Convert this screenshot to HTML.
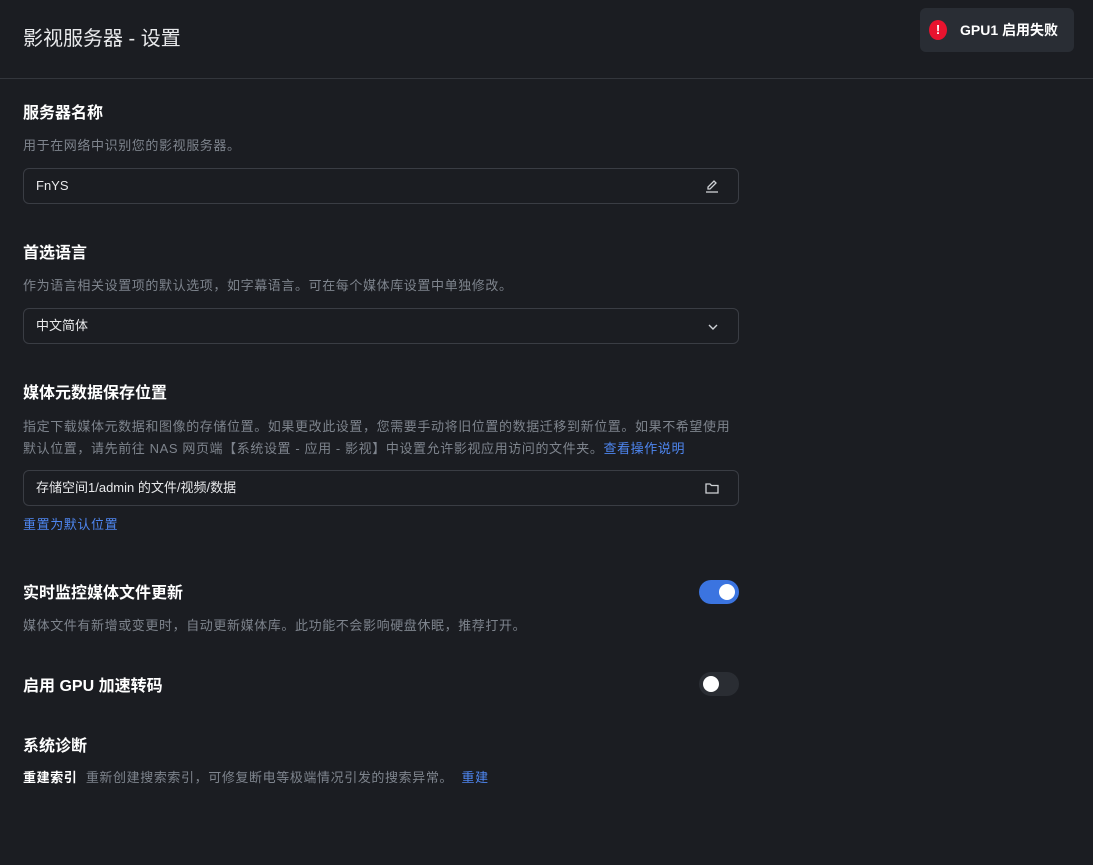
<!DOCTYPE html>
<html><head><meta charset="utf-8"><style>
*{box-sizing:border-box;margin:0;padding:0}
body{width:1093px;height:865px;background:#1b1d22;font-family:"Liberation Sans","Noto Sans CJK SC",sans-serif;color:#fff;position:relative;overflow:hidden}
.hdr{height:79px;border-bottom:1px solid #33363c;padding-left:23px;font-size:20px;line-height:79px;color:#e8e9eb}
.toast{position:absolute;left:920px;top:8px;width:154px;height:44px;background:#292d34;border-radius:6px;font-size:14px;font-weight:bold;line-height:44px;padding-left:40px;color:#fff}
.toast i{position:absolute;left:9px;top:12px;width:18px;height:20px;border-radius:50%;background:#e8132e}
.toast i:after{content:"!";position:absolute;left:0;right:0;top:-12px;text-align:center;font-style:normal;font-size:13px;color:#fff}
.abs{position:absolute;left:23px}
h3{font-size:16px;font-weight:bold;color:#fff}
.d{font-size:13px;color:#7e848d;line-height:20px;letter-spacing:0.6px}
.inp{position:absolute;left:23px;width:716px;height:36px;border:1px solid #3a3d44;border-radius:6px;font-size:13px;line-height:34px;padding-left:12px;color:#e8e9eb}
.inp svg{position:absolute;right:19px;top:10px}
a{color:#4e86f0;text-decoration:none}
.tg{position:absolute;left:699px;width:40px;height:24px;border-radius:12px}
.tg b{position:absolute;top:4px;width:16px;height:16px;border-radius:50%;background:#fff}
</style></head><body>
<div class="hdr">影视服务器 - 设置</div>
<div class="toast"><i></i>GPU1 启用失败</div>

<h3 class="abs" style="top:99px">服务器名称</h3>
<div class="abs d" style="top:136px">用于在网络中识别您的影视服务器。</div>
<div class="inp" style="top:168px">FnYS<svg width="14" height="14" viewBox="0 0 14 14" fill="none" stroke="#cfd2d6" stroke-width="1.3"><path d="M3 10 L3 8 L9 2 L11 4 L5 10 Z"/><path d="M1 13 H13"/></svg></div>

<h3 class="abs" style="top:239px">首选语言</h3>
<div class="abs d" style="top:276px">作为语言相关设置项的默认选项，如字幕语言。可在每个媒体库设置中单独修改。</div>
<div class="inp" style="top:308px">中文简体<svg width="12" height="12" viewBox="0 0 12 12" fill="none" stroke="#cfd2d6" stroke-width="1.4" style="top:12px"><path d="M2 4 L6 8 L10 4"/></svg></div>

<h3 class="abs" style="top:379px">媒体元数据保存位置</h3>
<div class="abs d" style="top:416px;width:718px;line-height:22px">指定下载媒体元数据和图像的存储位置。如果更改此设置，您需要手动将旧位置的数据迁移到新位置。如果不希望使用默认位置，请先前往 NAS 网页端【系统设置 - 应用 - 影视】中设置允许影视应用访问的文件夹。<a>查看操作说明</a></div>
<div class="inp" style="top:470px">存储空间1/admin 的文件/视频/数据<svg width="14" height="14" viewBox="0 0 14 14" fill="none" stroke="#cfd2d6" stroke-width="1.3"><path d="M1 3 H5 L6.5 4.5 H13 V12 H1 Z"/></svg></div>
<div class="abs d" style="top:515px"><a>重置为默认位置</a></div>

<h3 class="abs" style="top:579px">实时监控媒体文件更新</h3>
<div class="tg" style="top:580px;background:#3b74e0"><b style="right:4px"></b></div>
<div class="abs d" style="top:616px">媒体文件有新增或变更时，自动更新媒体库。此功能不会影响硬盘休眠，推荐打开。</div>

<h3 class="abs" style="top:672px">启用 GPU 加速转码</h3>
<div class="tg" style="top:672px;background:#2a2d33"><b style="left:4px"></b></div>

<h3 class="abs" style="top:732px">系统诊断</h3>
<div class="abs d" style="top:768px"><b style="color:#fff">重建索引</b>&nbsp; 重新创建搜索索引，可修复断电等极端情况引发的搜索异常。&nbsp; <a>重建</a></div>
</body></html>
